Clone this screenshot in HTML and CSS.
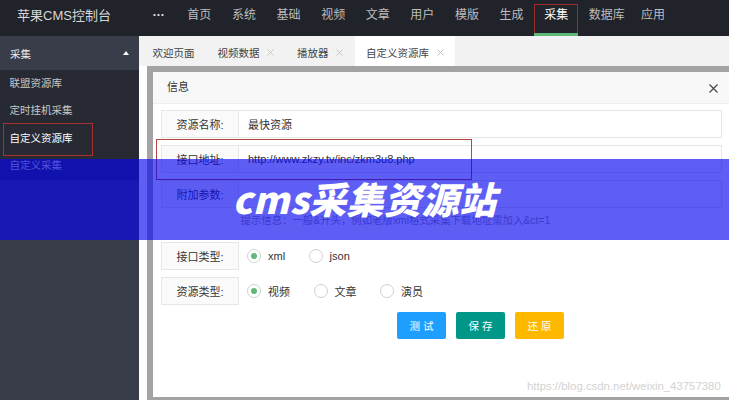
FILE: index.html
```html
<!DOCTYPE html>
<html lang="zh-CN">
<head>
<meta charset="utf-8">
<title>苹果CMS控制台</title>
<link rel="stylesheet" href="styles.css">
</head>
<body>
<header class="topbar">
  <div class="logo">苹果CMS控制台</div>
  <ul class="nav">
    <li class="more">···</li>
    <li>首页</li>
    <li>系统</li>
    <li>基础</li>
    <li>视频</li>
    <li>文章</li>
    <li>用户</li>
    <li>模版</li>
    <li>生成</li>
    <li class="active">采集</li>
    <li class="narrow">数据库</li>
    <li>应用</li>
  </ul>
</header>
<div class="layout">
  <aside class="side">
    <div class="side-title"><span>采集</span><span class="caret"></span></div>
    <ul class="side-sub">
      <li>联盟资源库</li>
      <li>定时挂机采集</li>
      <li class="on">自定义资源库</li>
      <li class="link">自定义采集</li>
    </ul>
  </aside>
  <main class="main">
    <div class="tabs">
      <div class="tab">欢迎页面</div>
      <div class="tab">视频数据<svg class="x" viewBox="0 0 7 7"><path d="M0.5 0.5L6.5 6.5M6.5 0.5L0.5 6.5"/></svg></div>
      <div class="tab">播放器<svg class="x" viewBox="0 0 7 7"><path d="M0.5 0.5L6.5 6.5M6.5 0.5L0.5 6.5"/></svg></div>
      <div class="tab cur">自定义资源库<svg class="x" viewBox="0 0 7 7"><path d="M0.5 0.5L6.5 6.5M6.5 0.5L0.5 6.5"/></svg></div>
    </div>
    <div class="stage">
      <div class="shade">
        <div class="dialog">
          <div class="dlg-title">信息<svg class="close" viewBox="0 0 9 9"><path d="M0.5 0.5L8.5 8.5M8.5 0.5L0.5 8.5"/></svg></div>
          <div class="dlg-body">
            <div class="row">
              <div class="lbl">资源名称:</div>
              <div class="inp">最快资源</div>
            </div>
            <div class="row hl">
              <div class="lbl">接口地址:</div>
              <div class="inp">http://www.zkzy.tv/inc/zkm3u8.php</div>
            </div>
            <div class="row">
              <div class="lbl">附加参数:</div>
              <div class="inp"></div>
            </div>
            <div class="tip">提示信息：一般&amp;开头，例如老版xml格式采集下载地址需加入&amp;ct=1</div>
            <div class="row">
              <div class="lbl">接口类型:</div>
              <div class="radios">
                <span class="radio on"><i></i>xml</span>
                <span class="radio"><i></i>json</span>
              </div>
            </div>
            <div class="row">
              <div class="lbl">资源类型:</div>
              <div class="radios">
                <span class="radio on"><i></i>视频</span>
                <span class="radio"><i></i>文章</span>
                <span class="radio"><i></i>演员</span>
              </div>
            </div>
            <div class="btns">
              <span class="btn blue">测试</span>
              <span class="btn green">保存</span>
              <span class="btn orange">还原</span>
            </div>
          </div>
        </div>
      </div>
    </div>
  </main>
</div>
<div class="banner">cms采集资源站</div>
<div class="watermark">https://blog.csdn.net/weixin_43757380</div>
</body>
</html>
```
FILE: styles.css
```css
* { box-sizing: border-box; margin: 0; padding: 0; }
html, body { width: 729px; height: 400px; overflow: hidden; }
body {
  position: relative;
  font-family: "Liberation Sans", "Noto Sans CJK SC", sans-serif;
  font-size: 11px;
  color: #333;
  background: #fff;
}
ul { list-style: none; }

.topbar { height: 36px; background: #21232b; display: flex; }
.logo {
  width: 142.5px; flex: none; padding-left: 17px;
  line-height: 31px; font-size: 13px; color: #d6d6d6; white-space: nowrap;
}
.nav { display: flex; }
.nav li {
  position: relative; height: 36px; line-height: 31px;
  padding: 0 10.3px; font-size: 12px; color: #bdbdbd; white-space: nowrap;
}
.nav .narrow { padding-right: 6px; }
.nav .more { width: 34.5px; padding: 0 2px 0 0; text-align: center; color: #e6e6e6; font-weight: bold; }
.nav .active { color: #fff; }
.nav .active::after {
  content: ""; position: absolute; left: 0; right: 0; bottom: 0; height: 3px; background: #5fb878;
}
.nav .active::before {
  content: ""; position: absolute; left: 0; top: 4px; width: 42px; height: 29px;
  border: 1px solid #a52a2a;
}

.layout { display: flex; height: 364px; }
.side { width: 139px; flex: none; background: #393d49; }
.side-title {
  height: 33.5px; display: flex; align-items: center; justify-content: space-between;
  padding: 1px 9.7px 0 10px; color: #ececec; font-size: 10.5px;
}
.caret {
  width: 0; height: 0;
  border-left: 3px solid transparent; border-right: 3px solid transparent;
  border-bottom: 4px solid #fff;
}
.side-sub { background: rgba(0, 0, 0, 0.3); }
.side-sub li {
  position: relative; height: 27.5px; line-height: 27.5px;
  padding-left: 9.5px; color: #c8c8c8; font-size: 10.5px;
}
.side-sub li.on { color: #fff; }
.side-sub li.link { color: #d6d6c0; }
.side-sub li.on::before {
  content: ""; position: absolute; left: 3px; top: -2px; width: 88px; height: 31px;
  border: 1px solid #a83030;
}

.main { flex: 1; display: flex; flex-direction: column; min-width: 0; }
.tabs { height: 30px; background: #f2f2f2; display: flex; padding-left: 2px; flex: none; }
.tab {
  display: flex; align-items: center; height: 30px; padding: 2px 11.5px 0 11.5px;
  font-size: 10.5px; color: #444; white-space: nowrap;
}
.tab.cur { background: #fff; }
.tab .x { width: 7px; height: 7px; margin-left: 7.5px; stroke: #c6c6c6; stroke-width: 1; fill: none; }

.stage { flex: 1; background: #fff; padding-left: 8px; }
.shade { height: 100%; background: #a3a3a3; padding: 6px 0 3px 6px; }
.dialog { height: 100%; background: #fff; }
.dlg-title {
  position: relative; height: 32px; background: #f8f8f8; border-bottom: 1px solid #eee;
  padding-left: 14px; line-height: 31px; color: #333;
}
.close {
  position: absolute; right: 11px; top: 12px; width: 9px; height: 9px;
  stroke: #444; stroke-width: 1.1; fill: none;
}
.dlg-body { padding: 6px 7px 0 8px; }
.row { position: relative; display: flex; height: 28px; margin-bottom: 7px; }
.lbl {
  width: 78px; flex: none; border: 1px solid #e6e6e6; background: #fafafa;
  display: flex; align-items: center; justify-content: center; color: #333;
}
.inp {
  flex: 1; border: 1px solid #e6e6e6; border-left: none; padding-left: 9px;
  display: flex; align-items: center; color: #333;
}
.row.hl::after {
  content: ""; position: absolute; left: -5px; top: -6px; width: 314px; height: 39px;
  border: 1px solid #b84444;
}
.tip { height: 27px; line-height: 12px; padding-left: 79.5px; color: #9a9a9a; font-size: 10.4px; }
.radios { display: flex; align-items: center; padding-left: 8px; }
.radio { display: flex; align-items: center; margin-right: 23.5px; color: #333; }
.radio i {
  width: 14px; height: 14px; border: 1px solid #cfcfcf; border-radius: 50%;
  margin-right: 7px; display: flex; align-items: center; justify-content: center;
}
.radio.on i { border-color: #c4d9c8; }
.radio.on i::after {
  content: ""; width: 6px; height: 6px; border-radius: 50%; background: #5fb878;
}
.btns { display: flex; gap: 10px; padding-left: 236px; }
.btn {
  width: 49px; height: 27px; border-radius: 2px; color: #fff; font-size: 10.5px;
  display: flex; align-items: center; justify-content: center;
  letter-spacing: 3px; padding-left: 3px;
}
.blue { background: #1e9fff; }
.green { background: #009688; }
.orange { background: #ffb800; }

.banner {
  position: absolute; left: 0; top: 159px; width: 729px; height: 81px;
  background: rgba(6, 6, 240, 0.647); color: #fff;
  font-family: "Noto Sans CJK SC", sans-serif; font-weight: 900; font-style: italic;
  font-size: 37px; line-height: 78px; text-align: center; letter-spacing: 0.5px;
}
.watermark {
  position: absolute; left: 527px; top: 380px; font-size: 11.4px; color: #d2d2d2;
  white-space: nowrap;
}
```
